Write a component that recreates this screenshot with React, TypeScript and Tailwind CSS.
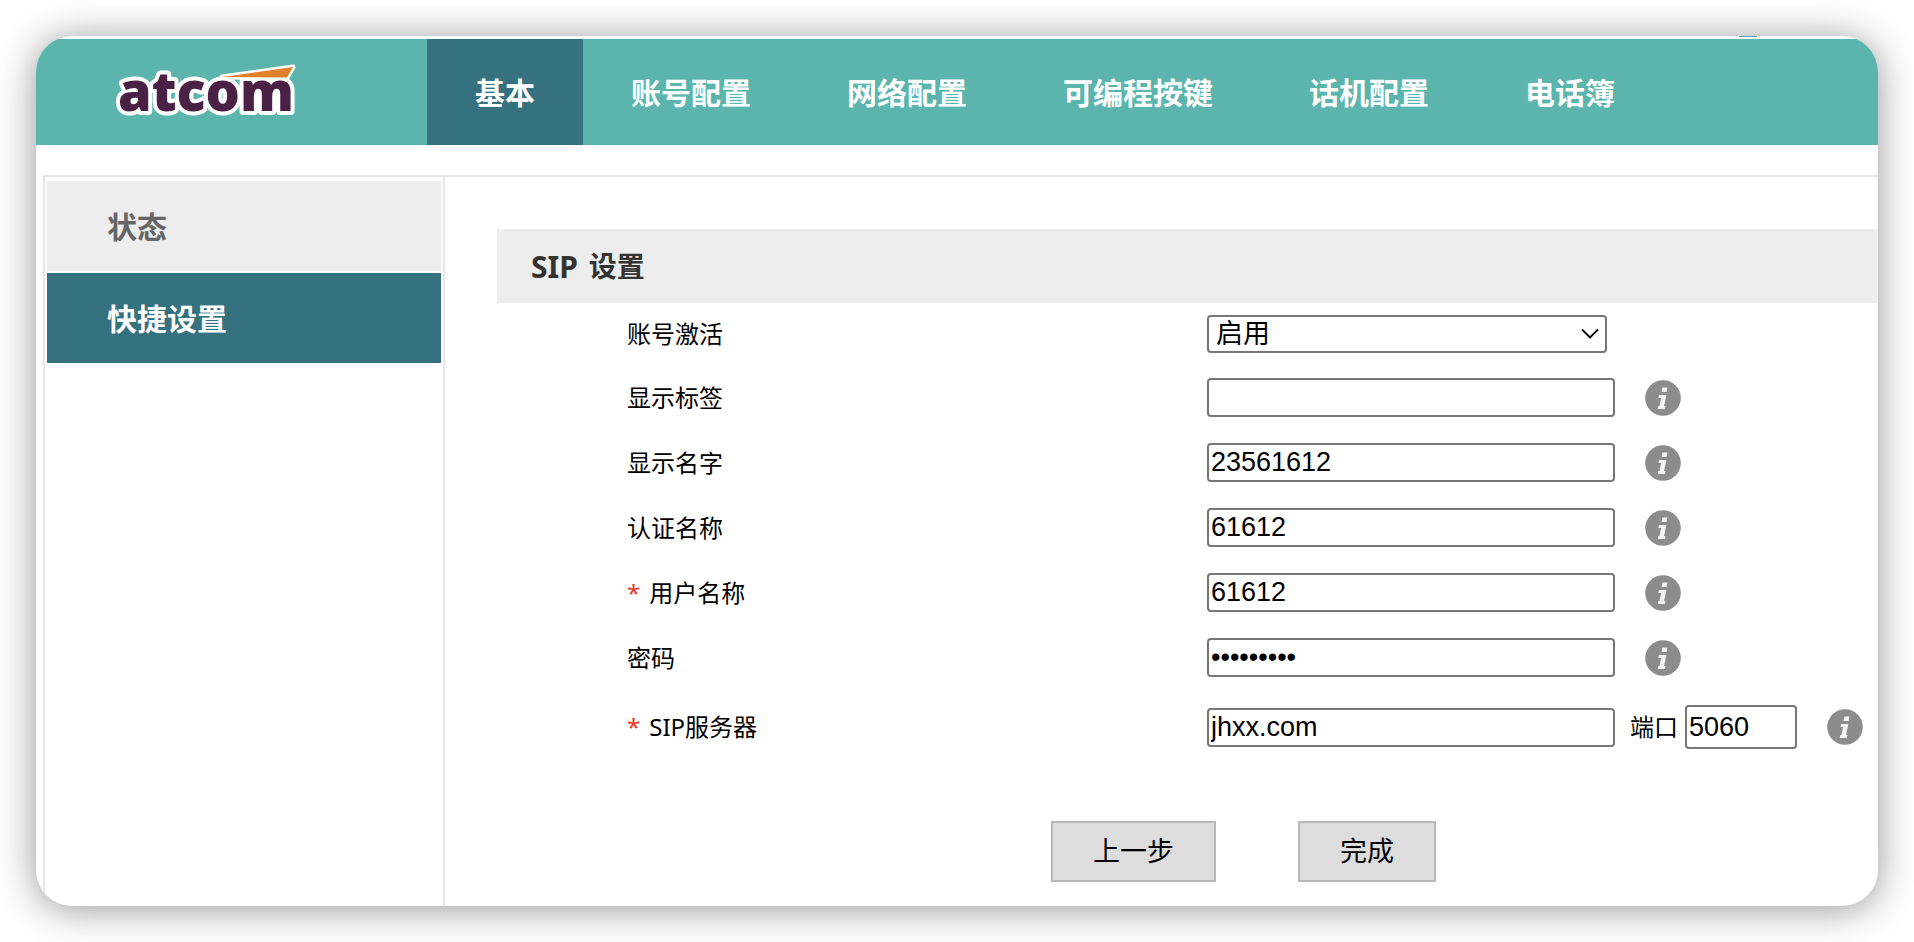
import React from 'react'

const tabs = ['基本', '账号配置', '网络配置', '可编程按键', '话机配置', '电话簿']

const sideItems = ['状态', '快捷设置']

const fields = [
  { id: 'display-label', label: '显示标签', value: '', type: 'text' },
  { id: 'display-name', label: '显示名字', value: '23561612', type: 'text' },
  { id: 'auth-name', label: '认证名称', value: '61612', type: 'text' },
  { id: 'user-name', label: '用户名称', value: '61612', type: 'text', required: true },
  { id: 'password', label: '密码', value: '123456789', type: 'password' },
]

const inputClass =
  'rounded-[4px] border-2 border-[#767676] bg-white px-[2px] font-["Liberation_Sans","Noto_Sans_CJK_SC",sans-serif] text-[27px] leading-[30px] text-black'

const buttonClass =
  'h-[61px] border-2 border-[#b8b8b8] bg-[#dddddd] px-10 font-["Liberation_Sans","Noto_Sans_CJK_SC",sans-serif] text-[27px] leading-[30px] text-black'

function Logo() {
  return (
    <svg width="190" height="88" viewBox="0 -10 190 88" role="img" aria-label="atcom">
      <text
        x="2"
        y="53"
        className='font-["Open_Sans","Noto_Sans",sans-serif] text-[54px] font-extrabold'
        fill="#4a2045"
        stroke="#ffffff"
        strokeWidth="8"
        strokeLinejoin="round"
        paintOrder="stroke"
      >
        atcom
      </text>
      <path d="M106 19 L177 9 L171 19.5 Z" fill="#e0812c" stroke="#ffffff" strokeWidth="5" strokeLinejoin="round" paintOrder="stroke" />
    </svg>
  )
}

function InfoIcon() {
  return (
    <svg className="ml-[30px] shrink-0" width="36" height="36" viewBox="0 0 36 36" aria-hidden="true">
      <circle cx="18" cy="18" r="17.8" fill="#8c8c8c" />
      <path d="M17.4 7.6 h5 l-0.8 4.4 h-5 Z" fill="#f4f4f4" />
      <path d="M14 15 h7.4 l-2.3 11 h1.4 l-0.6 3 h-7.2 l0.6 -3 h1.2 l1.6 -8 h-2.7 Z" fill="#f4f4f4" />
    </svg>
  )
}

function Label({ id, text, required }: { id: string; text: string; required?: boolean }) {
  return (
    <label htmlFor={id} className="w-[710px] shrink-0 pl-[130px] text-[24px] leading-[30px]">
      {required && <span className="mr-[9px] text-[#ea3a2a]">*</span>}
      {text}
    </label>
  )
}

export default function App() {
  return (
    <div className='flex min-h-screen flex-col bg-white p-9 font-["Noto_Sans","Noto_Sans_CJK_SC",sans-serif] text-black'>
      <div className="relative flex flex-1 flex-col overflow-hidden rounded-[36px] bg-white pt-[3px] shadow-[0_3px_38px_rgba(0,0,0,0.42)]">
        <span className="absolute top-0 right-[121px] h-px w-[18px] bg-[#5b9fbd]" />

        {/* Top bar */}
        <header className="flex h-[106px] items-stretch bg-[#5cb5ad]">
          <div className="flex w-[391px] shrink-0 items-center pl-20">
            <Logo />
          </div>
          <nav className="flex text-[30px] font-bold text-white">
            {tabs.map((tab, i) => (
              <a
                key={tab}
                href="#"
                className={i === 0 ? 'flex items-center bg-[#35717f] px-12 whitespace-nowrap' : 'flex items-center px-12 whitespace-nowrap'}
              >
                {tab}
              </a>
            ))}
          </nav>
        </header>

        <div className="mt-[30px] ml-[7px] flex flex-1 border-t-2 border-l-2 border-[#e8e8e8]">
          {/* Side menu */}
          <aside className="flex w-[400px] shrink-0 flex-col gap-[2px] border-r-2 border-[#e8e8e8] px-[2px] pt-1 text-[30px] font-bold">
            {sideItems.map((item, i) => (
              <a
                key={item}
                href="#"
                className={
                  i === 1
                    ? 'flex h-[90px] items-center bg-[#35717f] pl-[60px] text-white'
                    : 'flex h-[90px] items-center bg-[#ededed] pl-[60px] text-[#666666]'
                }
              >
                {item}
              </a>
            ))}
          </aside>

          {/* SIP form */}
          <main className="flex-1 pt-[52px] pl-[52px]">
            <h2 className="flex h-[74px] items-center gap-[11px] bg-[#ededed] pl-[34px] text-[28px] font-bold text-[#333333]">
              <span className="text-[30px]">SIP</span>
              <span>设置</span>
            </h2>
            <form onSubmit={(e) => e.preventDefault()}>
              <div className="flex h-[62px] items-center">
                <Label id="account-active" text="账号激活" />
                <div className="relative w-[400px]">
                  <select
                    id="account-active"
                    className='block h-[38px] w-full appearance-none rounded-[4px] border-2 border-[#767676] bg-white pl-[7px] font-["Liberation_Sans","Noto_Sans_CJK_SC",sans-serif] text-[27px] leading-[30px] text-black'
                  >
                    <option>启用</option>
                    <option>禁用</option>
                  </select>
                  <svg className="pointer-events-none absolute top-[13px] right-2" width="18" height="12" viewBox="0 0 18 12" fill="none" aria-hidden="true">
                    <path d="M1 1.5 L9 9.5 L17 1.5" stroke="#000000" strokeWidth="1.8" />
                  </svg>
                </div>
              </div>

              {fields.map((field) => (
                <div key={field.id} className="flex h-[65px] items-center">
                  <Label id={field.id} text={field.label} required={field.required} />
                  <input id={field.id} type={field.type} defaultValue={field.value} className={`h-[39px] w-[408px] ${inputClass}`} />
                  <InfoIcon />
                </div>
              ))}

              <div className="flex h-[74px] items-center">
                <Label id="sip-server" text="SIP服务器" required />
                <input id="sip-server" type="text" defaultValue="jhxx.com" className={`h-[39px] w-[408px] ${inputClass}`} />
                <label htmlFor="sip-port" className="mr-[7px] ml-[15px] text-[24px] leading-[30px] whitespace-nowrap">端口</label>
                <input id="sip-port" type="text" defaultValue="5060" className={`h-[44px] w-[112px] ${inputClass}`} />
                <InfoIcon />
              </div>

              <div className="mt-[57px] flex gap-[82px] pl-[554px]">
                <button type="button" className={buttonClass}>上一步</button>
                <button type="submit" className={buttonClass}>完成</button>
              </div>
            </form>
          </main>
        </div>
      </div>
    </div>
  )
}
